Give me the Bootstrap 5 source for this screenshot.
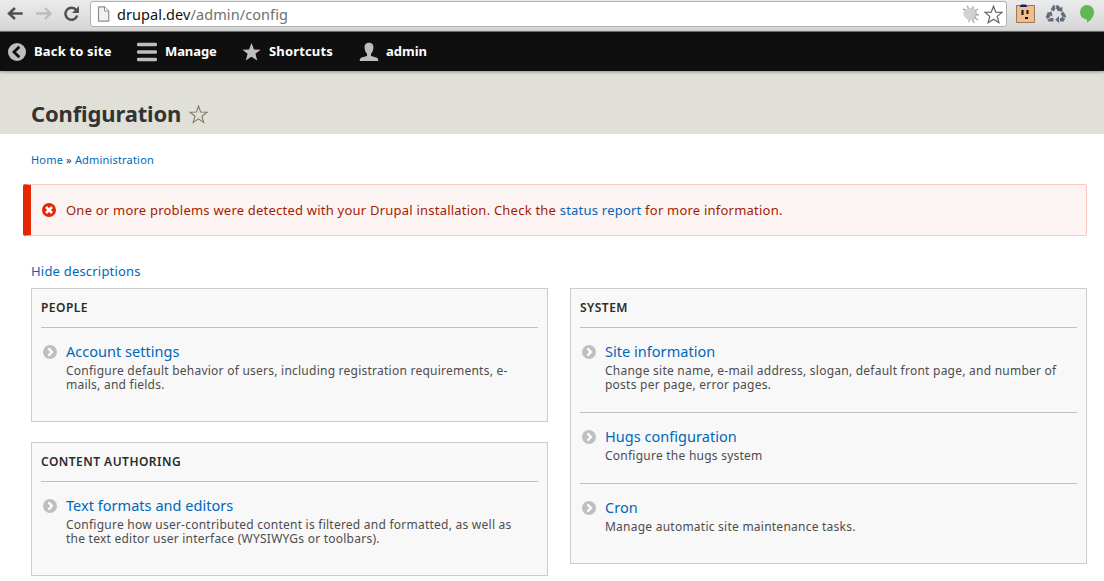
<!DOCTYPE html>
<html lang="en">
<head>
<meta charset="utf-8">
<meta name="viewport" content="width=device-width, initial-scale=1">
<title>Configuration | drupal.dev</title>
<link rel="stylesheet" href="https://cdn.jsdelivr.net/npm/bootstrap@5.3.0/dist/css/bootstrap.min.css">
<style>
body{font-family:"Lucida Grande","Noto Sans","Open Sans",sans-serif;font-size:13px;line-height:20px;color:#333;background:#fff;height:581px;overflow:hidden}
a{color:#0067b8;text-decoration:none}
svg{display:block;flex:none}
.browser{height:31px;background:linear-gradient(#ebebeb,#d6d6d6);padding-left:7px}
.omnibox{width:917px;height:26px;margin:1px 0 0 8px;border:1px solid #b0b0b0;border-radius:3px;background:#fff;padding:0 3px 0 6px}
.address{font-size:14.5px;margin-left:7px;color:#111;letter-spacing:.08px}
.address span{color:#707070}
.extensions{margin-left:9px}
.admin-bar{height:40px;background:#0f0f0f;border-top:1px solid #6a6a6a;padding-left:8px;font-weight:700;box-shadow:0 1px 3px rgba(0,0,0,.35);position:relative}
.admin-bar a{color:#fff;height:39px}
.admin-bar a:nth-child(1){width:129px;letter-spacing:.17px}
.admin-bar a:nth-child(2){width:105px;letter-spacing:-.1px}
.admin-bar a:nth-child(3){width:117px;letter-spacing:.15px}
.admin-bar a:nth-child(4) span{margin-left:7px}
.admin-bar span{margin:0 0 2px 8px}
.page-head{height:63px;background:#e0e0d8;padding:0 31px}
.page-head h1{font-size:22px;line-height:30px;font-weight:700;margin:27px 0 0;color:#333;letter-spacing:-.15px}
.title-star{margin:34px 0 0 8px}
.crumbs{font-size:11px;margin:16px 0 0 31px;white-space:pre;letter-spacing:.18px}
.problem{height:52px;margin:14px 17px 0 23px;border:1px solid #f9c9bf;border-left:8px solid #e62600;border-radius:2px;background:#fcf4f2;color:#a51b00;padding:0 0 0 11px}
.problem-text{margin-left:10px;letter-spacing:.22px}
.toggle-desc{margin:25px 0 0 31px;height:27px;letter-spacing:.2px}
.panels{display:grid;grid-template-columns:517px 517px;gap:22px;padding-left:31px;align-items:start}
.left-panels{row-gap:20px}
.panel{border:1px solid #ccc;background:#f8f8f8;padding:0 9px 9px}
.panel h2{font-size:12px;line-height:37px;height:39px;margin:0;border-bottom:1px solid #bfbfbf;text-transform:uppercase;font-weight:600;color:#2b2b2b;letter-spacing:.47px}
.entry{padding:14px 0 20px 1px}
.entry + .entry{border-top:1px solid #bfbfbf}
.entry svg{margin:3px 9px 0 1px}
.entry h3{font-size:14.5px;line-height:18px;height:22px;margin:0;font-weight:400;letter-spacing:.03px}
.entry p{font-size:12px;line-height:14px;margin:0;color:#4d4d4d;white-space:nowrap;letter-spacing:.24px}
</style>
</head>
<body>
<svg width="0" height="0" class="position-absolute"><defs>
<symbol id="arrow" viewBox="0 0 14 14"><circle cx="7" cy="7" r="7" fill="#bfbfbf"/><path d="M5.400 3.400 9 7l-3.600 3.600" fill="none" stroke="#fff" stroke-width="2.200"/></symbol>
</defs></svg>
<div class="browser d-flex align-items-start">
  <svg width="75" height="28" viewBox="0 0 75 28" fill="none">
    <path d="M15.700 13.500H3M8 8l-6 5.500L8 19" stroke="#505050" stroke-width="2.500"/>
    <path d="M29 13.500h13.500M38 8l5.500 5.500L38 19" stroke="#bdbdbd" stroke-width="2.300"/>
    <path d="M69.300 10.200A6 6 0 1 0 70.200 15.500" stroke="#505050" stroke-width="2.500"/><path d="M72 6v7h-7z" fill="#505050"/>
  </svg>
  <div class="omnibox d-flex align-items-center">
    <svg width="13" height="16" viewBox="0 0 13 16"><path d="M1.500.8h6L11.700 5v10.200H1.500z" fill="#f1f1f1" stroke="#8f8f8f" stroke-width="1.200"/><path d="M7.500.8V5h4.200" fill="#fff" stroke="#8f8f8f"/></svg>
    <div class="address">drupal.dev<span>/admin/config</span></div>
    <svg class="ms-auto" width="18" height="18" viewBox="0 0 18 18"><path d="m1 4 4 2M5 .8 7 4m4-3v3m5 0-3 2m4 4-3-.5m2 5.500-3-2m-1 5-1.500-3.500M7 17l.5-3" stroke="#aaa" stroke-width="1.400"/><circle cx="9" cy="9" r="6" fill="#b5b5b5"/><path d="M1 8.500C3 3 9 1.500 12.500 5c2 3 1 7-2 9C6 16 2 13 1 8.500z" fill="#d2d2d2"/></svg>
    <svg class="ms-1" width="19" height="19" viewBox="0 0 19 19"><path d="m9.500 1.200 2.300 5.900 6.200.3-4.800 4 1.700 6.300-5.400-3.500-5.400 3.500 1.700-6.300-4.800-4 6.200-.3z" fill="#fff" stroke="#606060" stroke-width="1.200"/></svg>
  </div>
  <svg class="extensions" width="88" height="28" viewBox="0 0 88 28">
    <path d="M.5 5.500h18v17H.5z" fill="#f1bd8d" stroke="#9c7759"/><path d="M4 7V5.500h1V4.500h5V5.500h1V7z" fill="#0b2467"/><path d="M5.500 10h2v5h-2zm5 0h2v4h-2zM9 17h3v2H9z" fill="#17110d"/>
    <g transform="translate(-1)"><g fill="none" stroke="#626d7c" stroke-width="3.600"><path d="m37.200 10.500 2-3.500 3.500.2 2.200 3.500M47 12.500l2.200 4-1.700 3.300h-4M38.500 19.800h-4l-1.700-3 1.800-3.600" stroke-dasharray="5 .9"/></g><path d="m42 10.800 5.500 1-.2-5.300zM44 16v7l-3.800-3.300zM31.500 12.800l5.300-1.300.7 5.200z" fill="#626d7c"/></g>
    <path d="M71 5a7 7 0 0 1 7 7c0 4.500-3 8.500-7 10.500V19.500c-4-.3-7-3.300-7-7.500a7 7 0 0 1 7-7z" fill="#62b755"/>
  </svg>
</div>
<nav class="admin-bar d-flex">
  <a href="#" class="d-flex align-items-center"><svg width="18" height="18" viewBox="0 0 18 18"><circle cx="9" cy="9" r="9" fill="#bebebe"/><path d="M11.300 3.700 6 9l5.300 5.300" fill="none" stroke="#0f0f0f" stroke-width="2.800"/></svg><span>Back to site</span></a>
  <a href="#" class="d-flex align-items-center"><svg width="20" height="20" viewBox="0 0 20 20"><path d="M1.500 2.500h17M1.500 10h17M1.500 17.500h17" stroke="#bebebe" stroke-width="3.500" stroke-linecap="round"/></svg><span>Manage</span></a>
  <a href="#" class="d-flex align-items-center"><svg width="19" height="20" viewBox="0 0 20 20"><path d="m10 .5 2.600 6.800 7 .2-5.500 4.400 2 7.100L10 15l-6.100 4 2-7.100L.4 7.500l7-.2z" fill="#bebebe"/></svg><span>Shortcuts</span></a>
  <a href="#" class="d-flex align-items-center"><svg width="20" height="20" viewBox="0 0 20 20"><path d="M10 .7c3.300 0 4.600 2.200 4.400 5.200-.2 2.500-1.100 4.400-2.400 5.800v2.200l5.400 1.700c1.300.5 1.900 1.500 1.900 3.400H.7c0-1.900.6-2.900 1.900-3.400L8 13.900v-2.200C6.700 10.300 5.800 8.400 5.600 5.900 5.400 2.900 6.700.7 10 .7z" fill="#bebebe"/></svg><span>admin</span></a>
</nav>
<header class="page-head d-flex">
  <h1>Configuration</h1>
  <svg class="title-star" width="19" height="19" viewBox="0 0 19 19"><path d="m9.500 1 2.100 6 6.500.2-5.200 4 1.900 6.200-5.300-3.600-5.300 3.600 1.900-6.200-5.200-4L7.400 7z" fill="none" stroke="#7c7c6c" stroke-width="1.100"/></svg>
</header>
<main>
  <div class="crumbs"><a href="#">Home</a> » <a href="#">Administration</a></div>
  <div class="problem d-flex align-items-center"><svg width="14" height="14" viewBox="0 0 14 14"><circle cx="7" cy="7" r="7" fill="#e62600"/><path d="m4 4 6 6m0-6-6 6" stroke="#fff" stroke-width="2.600"/></svg><div class="problem-text">One or more problems were detected with your Drupal installation. Check the <a href="#">status report</a> for more information.</div></div>
  <div class="toggle-desc"><a href="#">Hide descriptions</a></div>
  <div class="panels">
    <div class="d-grid left-panels">
      <section class="panel"><h2>People</h2>
        <div class="entry d-flex"><svg width="14" height="14"><use href="#arrow"/></svg><div><h3><a href="#">Account settings</a></h3><p>Configure default behavior of users, including registration requirements, e-<br>mails, and fields.</p></div></div>
      </section>
      <section class="panel"><h2>Content authoring</h2>
        <div class="entry d-flex"><svg width="14" height="14"><use href="#arrow"/></svg><div><h3><a href="#">Text formats and editors</a></h3><p>Configure how user-contributed content is filtered and formatted, as well as<br>the text editor user interface (WYSIWYGs or toolbars).</p></div></div>
      </section>
    </div>
    <section class="panel"><h2>System</h2>
      <div class="entry d-flex"><svg width="14" height="14"><use href="#arrow"/></svg><div><h3><a href="#">Site information</a></h3><p>Change site name, e-mail address, slogan, default front page, and number of<br>posts per page, error pages.</p></div></div>
      <div class="entry d-flex"><svg width="14" height="14"><use href="#arrow"/></svg><div><h3><a href="#">Hugs configuration</a></h3><p>Configure the hugs system</p></div></div>
      <div class="entry d-flex"><svg width="14" height="14"><use href="#arrow"/></svg><div><h3><a href="#">Cron</a></h3><p>Manage automatic site maintenance tasks.</p></div></div>
    </section>
  </div>
</main>
<script src="https://cdn.jsdelivr.net/npm/bootstrap@5.3.0/dist/js/bootstrap.bundle.min.js"></script>
</body>
</html>
